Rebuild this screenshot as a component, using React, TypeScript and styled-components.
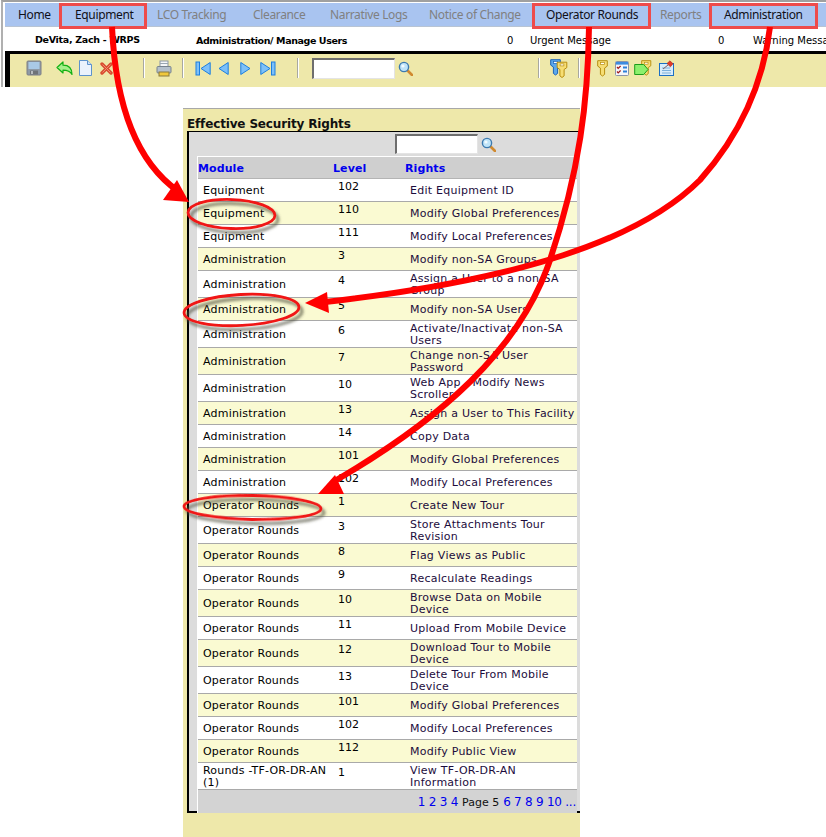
import React from "react";
import styled, { createGlobalStyle } from "styled-components";

const GlobalStyle = createGlobalStyle`
  html, body {
    margin: 0;
    padding: 0;
    background: #fff;
    overflow: hidden;
  }
  * { box-sizing: border-box; }
`;

const Page = styled.div`
  position: relative;
  width: 826px;
  height: 837px;
  overflow: hidden;
  font-family: "DejaVu Sans", Verdana, sans-serif;
  font-size: 11px;
  color: #000;
`;

/* top application frame */
const Frame = styled.div`
  height: 87px;
  border-top: 2px solid #a0a0a0;
  border-left: 2px solid #b0b0b0;
  margin-left: 1px;
  padding: 1px 0 0 2px;
  display: flex;
  flex-direction: column;
`;

const Nav = styled.nav`
  display: flex;
  height: 24px;
  background: #a9c4f0;
  border-bottom: 1px solid #b8c4d4;
`;

const NavItem = styled.div<{ $w: number; $pl: number; $off?: boolean; $marked?: boolean }>`
  position: relative;
  flex: none;
  width: ${(p) => p.$w}px;
  padding-left: ${(p) => p.$pl}px;
  line-height: 23px;
  font-family: "Noto Sans", "Open Sans", sans-serif;
  font-size: 12px;
  letter-spacing: -0.35px;
  white-space: nowrap;
  color: ${(p) => (p.$off ? "#808080" : "#101018")};
  ${(p) =>
    p.$marked &&
    `
    &::after {
      content: "";
      position: absolute;
      left: 0;
      right: 0;
      top: 0;
      bottom: -3px;
      border: 3px solid #ee4b4b;
    }
  `}
`;

const InfoRow = styled.div`
  display: grid;
  grid-template-columns: 161px 311px 23px 188px 35px 1fr;
  height: 24px;
  padding: 3px 0 0 30px;
  align-items: center;
  font-size: 10px;
  white-space: nowrap;
  overflow: hidden;
`;

const Strong = styled.span<{ $up?: boolean }>`
  font-size: 9.5px;
  font-weight: bold;
  letter-spacing: ${(p) => (p.$up ? "-0.3px" : "-0.4px")};
  position: relative;
  top: ${(p) => (p.$up ? "-1px" : "0")};
`;

const Toolbar = styled.div`
  flex: 1;
  display: flex;
  align-items: center;
  background: #eee8aa;
  border-top: 3px solid #000;
  border-left: 5px solid #000;
  padding: 0 0 5px 16px;
`;

const Tool = styled.span<{ $ml: number }>`
  display: flex;
  flex: none;
  margin-left: ${(p) => p.$ml}px;
`;

const Sep = styled.span<{ $ml: number }>`
  flex: none;
  width: 2px;
  height: 20px;
  margin-left: ${(p) => p.$ml}px;
  background: #a8a8a0;
  border-right: 1px solid #fff;
`;

const SearchInput = styled.div<{ $w: number; $h: number; $ml: number }>`
  flex: none;
  width: ${(p) => p.$w}px;
  height: ${(p) => p.$h}px;
  margin-left: ${(p) => p.$ml}px;
  background: #fff;
  border: 1px solid #e4e4e4;
  border-top: 2px solid #6e6e6e;
  border-left: 2px solid #6e6e6e;
`;

/* security rights panel */
const Panel = styled.section`
  width: 397px;
  height: 729px;
  margin: 21px 0 0 183px;
  background: #eee8aa;
  border-top: 1px solid #a8a8a8;
  padding-left: 4px;
`;

const Title = styled.h2`
  margin: 0;
  height: 22px;
  font-size: 12px;
  font-weight: bold;
  line-height: 30px;
  letter-spacing: -0.15px;
  white-space: nowrap;
  color: #111;
`;

const Box = styled.div`
  height: 682px;
  background: #dcdcdc;
  border-top: 1px solid #000;
  border-left: 2px solid #000;
  border-bottom: 2px solid #000;
  padding-left: 8px;
  padding-right: 3px;
`;

const SearchRow = styled.div`
  display: flex;
  align-items: center;
  height: 24px;
  padding-left: 198px;
`;

const Table = styled.div`
  border-top: 1px solid #fff;
  border-left: 1px solid #fff;
`;

const columns = "135px 72px 1fr";

const HeadRow = styled.div`
  display: grid;
  grid-template-columns: ${columns};
  height: 22px;
  align-items: center;
  background: #cfcfcf;
  border-bottom: 1px solid #b4b4b4;
  font-weight: bold;
  letter-spacing: 0.1px;
  color: #0000ee;
`;

const HeadCell = styled.div`
  padding-top: 2px;
`;

const Row = styled.div<{ $alt: boolean; $tall: boolean }>`
  display: grid;
  grid-template-columns: ${columns};
  height: ${(p) => (p.$tall ? 27 : 23)}px;
  align-items: center;
  line-height: 12px;
  background: ${(p) => (p.$alt ? "#fafad2" : "#fff")};
  border-bottom: 1px solid #a9a9a9;
`;

const Cell = styled.div`
  padding: 2px 0 0 5px;
  letter-spacing: 0.2px;
`;

const LevelCell = styled.div<{ $tall: boolean }>`
  align-self: start;
  padding: ${(p) => (p.$tall ? 4 : 2)}px 0 0 5px;
`;

const RightsCell = styled.div`
  padding: 2px 0 0 5px;
  letter-spacing: 0.25px;
  color: #1c0c3c;
`;

const Footer = styled.div`
  display: flex;
  justify-content: flex-end;
  align-items: center;
  gap: 4px;
  height: 23px;
  padding: 1px 1px 0 0;
  background: #d3d3d3;
  white-space: nowrap;
`;

const PageLink = styled.span`
  font-size: 12px;
  color: #0000ee;
  letter-spacing: -0.25px;
`;

const Current = styled.span`
  font-size: 11px;
  color: #111;
`;

const Annotations = styled.svg`
  position: absolute;
  left: 0;
  top: 0;
  pointer-events: none;
`;

const navItems = [
  { label: "Home", w: 54, pl: 13 },
  { label: "Equipment", w: 88, pl: 16, marked: true },
  { label: "LCO Tracking", w: 96, pl: 10, off: true },
  { label: "Clearance", w: 77, pl: 10, off: true },
  { label: "Narrative Logs", w: 99, pl: 10, off: true },
  { label: "Notice of Change", w: 113, pl: 10, off: true },
  { label: "Operator Rounds", w: 119, pl: 14, marked: true },
  { label: "Reports", w: 58, pl: 9, off: true },
  { label: "Administration", w: 109, pl: 15, marked: true },
];

type RightRow = [string, string, string, boolean?];

const rows: RightRow[] = [
  ["Equipment", "102", "Edit Equipment ID"],
  ["Equipment", "110", "Modify Global Preferences"],
  ["Equipment", "111", "Modify Local Preferences"],
  ["Administration", "3", "Modify non-SA Groups"],
  ["Administration", "4", "Assign a User to a non-SA Group", true],
  ["Administration", "5", "Modify non-SA Users"],
  ["Administration", "6", "Activate/Inactivate non-SA Users", true],
  ["Administration", "7", "Change non-SA User Password", true],
  ["Administration", "10", "Web App - Modify News Scroller", true],
  ["Administration", "13", "Assign a User to This Facility"],
  ["Administration", "14", "Copy Data"],
  ["Administration", "101", "Modify Global Preferences"],
  ["Administration", "102", "Modify Local Preferences"],
  ["Operator Rounds", "1", "Create New Tour"],
  ["Operator Rounds", "3", "Store Attachments Tour Revision", true],
  ["Operator Rounds", "8", "Flag Views as Public"],
  ["Operator Rounds", "9", "Recalculate Readings"],
  ["Operator Rounds", "10", "Browse Data on Mobile Device", true],
  ["Operator Rounds", "11", "Upload From Mobile Device"],
  ["Operator Rounds", "12", "Download Tour to Mobile Device", true],
  ["Operator Rounds", "13", "Delete Tour From Mobile Device", true],
  ["Operator Rounds", "101", "Modify Global Preferences"],
  ["Operator Rounds", "102", "Modify Local Preferences"],
  ["Operator Rounds", "112", "Modify Public View"],
  ["Rounds -TF-OR-DR-AN (1)", "1", "View TF-OR-DR-AN Information", true],
];

const SaveIcon = () => (
  <svg width="16" height="16" viewBox="0 0 16 16">
    <rect x="1" y="1" width="14" height="14" rx="1" fill="#8f9aa6" stroke="#7c7f86" />
    <rect x="2.5" y="2" width="11" height="7" fill="#a9c9e6" />
    <rect x="4" y="10.5" width="8" height="4" fill="#6f7378" />
    <rect x="5" y="11" width="2" height="3" fill="#b8bcc0" />
  </svg>
);

const ReplyIcon = () => (
  <svg width="17" height="15" viewBox="0 0 17 15">
    <path d="M1 6.5 7 1v3.2c5 0 9 2.2 9 9.3-1.8-3.3-4.6-4.3-9-4.3V12z" fill="#a5f08a" stroke="#12b012" strokeWidth="1.2" strokeLinejoin="round" />
  </svg>
);

const DocIcon = () => (
  <svg width="13" height="16" viewBox="0 0 13 16">
    <path d="M.5.5h8l4 4v11H.5z" fill="#eaf2fc" stroke="#5c92cc" />
    <path d="M8.5.5v4h4" fill="#cfe0f4" stroke="#5c92cc" />
  </svg>
);

const DeleteIcon = () => (
  <svg width="13" height="13" viewBox="0 0 13 13">
    <path d="M2 2l9 9M11 2l-9 9" stroke="#d84c30" strokeWidth="3.4" strokeLinecap="round" />
    <path d="M2.5 2.5l8 8M10.5 2.5l-8 8" stroke="#f08a70" strokeWidth="1" />
  </svg>
);

const PrintIcon = () => (
  <svg width="16" height="17" viewBox="0 0 16 17">
    <rect x="4" y="1" width="8" height="6" fill="#f4f6f8" stroke="#8a96a4" />
    <rect x="1" y="6.5" width="14" height="6.5" rx="1" fill="#b4c0cc" stroke="#76828e" />
    <rect x="3" y="12" width="10" height="4" fill="#f0c83c" stroke="#8a7a3c" />
    <rect x="4" y="3" width="8" height="1" fill="#9aa6b2" />
  </svg>
);

const NavArrow = ({ dir, bar }: { dir: "left" | "right"; bar?: boolean }) => {
  const flip = dir === "left" ? "translate(16 0) scale(-1 1)" : undefined;
  return (
    <svg width={bar ? 16 : 11} height="15" viewBox={bar ? "0 0 16 15" : "0 0 11 15"}>
      <g transform={dir === "left" && !bar ? "translate(11 0) scale(-1 1)" : flip}>
        <path d="M.8 1.5 10 7.5.8 13.5z" fill="#7cc0f8" stroke="#1c7ee0" strokeLinejoin="round" />
        {bar && <rect x="11.5" y="1" width="3.5" height="13" fill="#7cc0f8" stroke="#1c7ee0" />}
      </g>
    </svg>
  );
};

const Magnifier = () => (
  <svg width="15" height="15" viewBox="0 0 15 15">
    <path d="M9.5 9.5 14 14" stroke="#d08a30" strokeWidth="2.6" strokeLinecap="round" />
    <circle cx="6" cy="6" r="4.6" fill="#bfe4f8" stroke="#3c7ab0" strokeWidth="1.4" />
    <circle cx="5" cy="5" r="1.6" fill="#f2fbff" />
  </svg>
);

const KeyShape = ({ fill, stroke }: { fill: string; stroke: string }) => (
  <g>
    <path d="M.7.7h9.6v5.4L7.6 8v6.4L5.5 16 3.4 14.4V8L.7 6.1z" fill={fill} stroke={stroke} />
    <rect x="3.6" y="2.4" width="3.8" height="2" fill="#fff" stroke={stroke} strokeWidth=".7" />
  </g>
);

const KeysIcon = () => (
  <svg width="18" height="19" viewBox="0 0 18 19">
    <KeyShape fill="#5ca8ec" stroke="#1c64b8" />
    <g transform="translate(6.5 2.5)">
      <KeyShape fill="#f6de74" stroke="#b88e10" />
    </g>
  </svg>
);

const KeyIcon = () => (
  <svg width="11" height="17" viewBox="0 0 11 17">
    <KeyShape fill="#f6de74" stroke="#b88e10" />
  </svg>
);

const ChecklistIcon = () => (
  <svg width="14" height="15" viewBox="0 0 14 15">
    <rect x=".5" y=".5" width="13" height="14" rx="1" fill="#f4f6fa" stroke="#8a94a8" />
    <rect x="1" y="1" width="12" height="2.6" fill="#3c8ce0" />
    <path d="M2 6l1.2 1.4L5.6 5M2 10.5l1.2 1.4 2.4-2.4" fill="none" stroke="#a01818" strokeWidth="1.2" />
    <rect x="8" y="5.5" width="4" height="2" fill="#2c80d8" />
    <rect x="8" y="9.5" width="4" height="2" fill="#2c80d8" />
  </svg>
);

const MoveKeyIcon = () => (
  <svg width="18" height="17" viewBox="0 0 18 17">
    <g transform="translate(7 0) scale(.95)">
      <KeyShape fill="#f6de74" stroke="#b88e10" />
    </g>
    <path d="M.7 4.5h9L14 9.5l-4.3 5h-9z" fill="#8cf06c" stroke="#1c9c1c" />
  </svg>
);

const PinIcon = () => (
  <svg width="15" height="16" viewBox="0 0 15 16">
    <rect x=".5" y="3.5" width="14" height="12" fill="#d8ecfa" stroke="#1c70c4" />
    <path d="M3 8h8M3 10.5h9M3 13h9" stroke="#7cb0dc" />
    <path d="M4 9 9 5" stroke="#806060" />
    <path d="M8 3.5 11 .8l3 3-2.6 3z" fill="#e03c28" stroke="#b02818" strokeWidth=".6" />
  </svg>
);

function Arrows() {
  return (
    <Annotations width="826" height="837" viewBox="0 0 826 837">
      <defs>
        <filter id="ringShadow" x="-20%" y="-40%" width="140%" height="190%">
          <feDropShadow dx="3" dy="4" stdDeviation="1.6" floodColor="#50503c" floodOpacity="0.75" />
        </filter>
      </defs>
      <g fill="none" stroke="#f01414" strokeWidth="2.8" filter="url(#ringShadow)">
        <ellipse cx="231.5" cy="214" rx="43.5" ry="14.5" transform="rotate(2 231 214)" />
        <ellipse cx="241.5" cy="310" rx="57.5" ry="15.5" transform="rotate(-3 241 310)" />
        <ellipse cx="252.5" cy="507.5" rx="68.5" ry="12" transform="rotate(1 252 507)" />
      </g>
      <g fill="none" stroke="#ff0000" strokeWidth="6">
        <path d="M112 27C115 92 131 158 178 191" />
        <path d="M770 27C763 85 740 135 700 180C640 240 520 280 325 302" />
        <path d="M589 27C588 100 580 170 550 260C520 350 440 420 333 482" />
      </g>
      <g fill="#ff0000">
        <polygon points="189,202 163,200 177,180" />
        <polygon points="305,303 327,292 329,313" />
        <polygon points="318,494 335,475 344,494" />
      </g>
    </Annotations>
  );
}

export default function App() {
  return (
    <Page>
      <GlobalStyle />
      <Frame>
        <Nav>
          {navItems.map((item) => (
            <NavItem key={item.label} $w={item.w} $pl={item.pl} $off={item.off} $marked={item.marked}>
              {item.label}
            </NavItem>
          ))}
        </Nav>
        <InfoRow>
          <Strong $up>DeVita, Zach - WRPS</Strong>
          <Strong>Administration/ Manage Users</Strong>
          <span>0</span>
          <span>Urgent Message</span>
          <span>0</span>
          <span>Warning Message</span>
        </InfoRow>
        <Toolbar>
          <Tool $ml={0}><SaveIcon /></Tool>
          <Tool $ml={14}><ReplyIcon /></Tool>
          <Tool $ml={6}><DocIcon /></Tool>
          <Tool $ml={8}><DeleteIcon /></Tool>
          <Sep $ml={30} />
          <Tool $ml={11}><PrintIcon /></Tool>
          <Sep $ml={10} />
          <Tool $ml={11}><NavArrow dir="left" bar /></Tool>
          <Tool $ml={7}><NavArrow dir="left" /></Tool>
          <Tool $ml={11}><NavArrow dir="right" /></Tool>
          <Tool $ml={9}><NavArrow dir="right" bar /></Tool>
          <Sep $ml={21} />
          <SearchInput $w={83} $h={21} $ml={13} />
          <Tool $ml={3}><Magnifier /></Tool>
          <Sep $ml={125} />
          <Tool $ml={10}><KeysIcon /></Tool>
          <Sep $ml={10} />
          <Tool $ml={17}><KeyIcon /></Tool>
          <Tool $ml={7}><ChecklistIcon /></Tool>
          <Tool $ml={5}><MoveKeyIcon /></Tool>
          <Tool $ml={7}><PinIcon /></Tool>
        </Toolbar>
      </Frame>
      <Panel>
        <Title>Effective Security Rights</Title>
        <Box>
          <SearchRow>
            <SearchInput $w={83} $h={20} $ml={0} />
            <Tool $ml={3}><Magnifier /></Tool>
          </SearchRow>
          <Table>
            <HeadRow>
              <HeadCell>Module</HeadCell>
              <HeadCell>Level</HeadCell>
              <HeadCell>Rights</HeadCell>
            </HeadRow>
            {rows.map(([module, level, rights, tall], i) => (
              <Row key={i} $alt={i % 2 === 1} $tall={!!tall}>
                <Cell>{module}</Cell>
                <LevelCell $tall={!!tall}>{level}</LevelCell>
                <RightsCell>{rights}</RightsCell>
              </Row>
            ))}
            <Footer>
              <PageLink>1 2 3 4</PageLink>
              <Current>Page 5</Current>
              <PageLink>6 7 8 9 10 ...</PageLink>
            </Footer>
          </Table>
        </Box>
      </Panel>
      <Arrows />
    </Page>
  );
}
